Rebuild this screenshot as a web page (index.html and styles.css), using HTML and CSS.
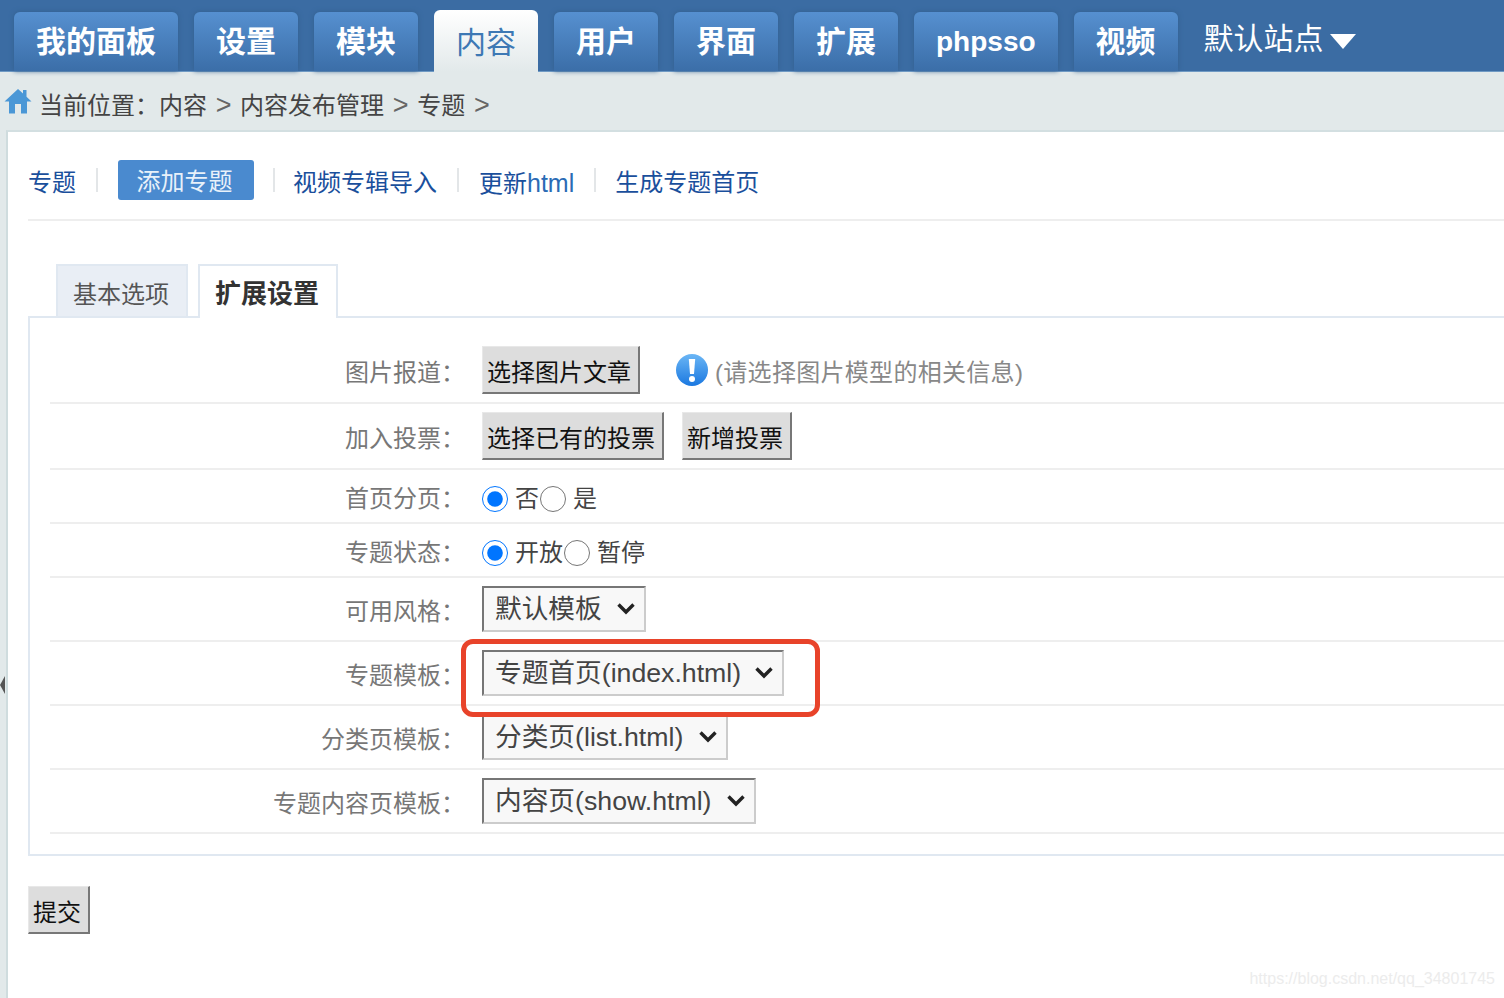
FILE: index.html
```html
<!DOCTYPE html>
<html lang="zh-CN">
<head>
<meta charset="utf-8">
<title>专题模板</title>
<link rel="stylesheet" href="styles.css">
</head>
<body>
<header class="topnav">
  <a class="navtab">我的面板</a>
  <a class="navtab">设置</a>
  <a class="navtab">模块</a>
  <a class="navtab navtab-on">内容</a>
  <a class="navtab">用户</a>
  <a class="navtab">界面</a>
  <a class="navtab">扩展</a>
  <a class="navtab navtab-latin">phpsso</a>
  <a class="navtab">视频</a>
  <div class="site">默认站点<span class="site-arrow"></span></div>
</header>
<nav class="crumb">
  <svg class="home" viewBox="0 0 28 26"><path d="M14 1 L0.5 13.5 L5 13.5 L5 25.5 L11 25.5 L11 16 L17 16 L17 25.5 L23 25.5 L23 13.5 L27.5 13.5 L22.5 8.8 L22.5 2 L19 2 L19 5.6 Z" fill="#4a97d6"/></svg>
  <span>当前位置：内容 <i class="gt">&gt;</i> 内容发布管理 <i class="gt">&gt;</i> 专题 <i class="gt">&gt;</i></span>
</nav>
<span class="edge-arrow"></span>
<main class="sheet">
  <div class="subnav">
    <a class="sublink">专题</a><i class="sep"></i>
    <a class="sublink sublink-on">添加专题</a><i class="sep sep-tight"></i>
    <a class="sublink">视频专辑导入</a><i class="sep"></i>
    <a class="sublink">更新<span class="latin">html</span></a><i class="sep"></i>
    <a class="sublink sublink-last">生成专题首页</a>
  </div>
  <div class="tabs">
    <a class="tab">基本选项</a>
    <a class="tab tab-on">扩展设置</a>
  </div>
  <section class="panel">
    <div class="row">
      <label class="lbl">图片报道：</label>
      <div class="field">
        <button class="btn">选择图片文章</button>
        <svg class="info" viewBox="0 0 32 32">
          <defs><linearGradient id="infoFill" x1="0" y1="0" x2="0" y2="1"><stop offset="0" stop-color="#6bb6f5"/><stop offset="1" stop-color="#1b78e0"/></linearGradient></defs>
          <circle cx="16" cy="16" r="16" fill="url(#infoFill)"/>
          <path d="M12.8 5 H19.2 L18 20 H14 Z" fill="#fff"/>
          <circle cx="16" cy="25" r="3" fill="#fff"/>
        </svg>
        <span class="hint">(请选择图片模型的相关信息)</span>
      </div>
    </div>
    <div class="row">
      <label class="lbl">加入投票：</label>
      <div class="field field-btns">
        <button class="btn">选择已有的投票</button>
        <button class="btn">新增投票</button>
      </div>
    </div>
    <div class="row row-radio">
      <label class="lbl">首页分页：</label>
      <div class="field radios">
        <input class="radio" type="radio" name="a" checked><span class="opt">否</span><input class="radio" type="radio" name="a"><span class="opt">是</span>
      </div>
    </div>
    <div class="row row-radio">
      <label class="lbl">专题状态：</label>
      <div class="field radios">
        <input class="radio" type="radio" name="b" checked><span class="opt">开放</span><input class="radio" type="radio" name="b"><span class="opt">暂停</span>
      </div>
    </div>
    <div class="row">
      <label class="lbl">可用风格：</label>
      <div class="selectbox sel-style">
        <select class="sel"><option>默认模板</option></select>
        <svg class="chev" viewBox="0 0 20 13"><path d="M2.5 2.5 L10 10 L17.5 2.5" fill="none" stroke="#222" stroke-width="3.4"/></svg>
      </div>
    </div>
    <div class="row row-marked">
      <label class="lbl">专题模板：</label>
      <div class="selectbox sel-index">
        <select class="sel"><option>专题首页(index.html)</option></select>
        <svg class="chev" viewBox="0 0 20 13"><path d="M2.5 2.5 L10 10 L17.5 2.5" fill="none" stroke="#222" stroke-width="3.4"/></svg>
      </div>
      <span class="mark"></span>
    </div>
    <div class="row">
      <label class="lbl">分类页模板：</label>
      <div class="selectbox sel-list">
        <select class="sel"><option>分类页(list.html)</option></select>
        <svg class="chev" viewBox="0 0 20 13"><path d="M2.5 2.5 L10 10 L17.5 2.5" fill="none" stroke="#222" stroke-width="3.4"/></svg>
      </div>
    </div>
    <div class="row">
      <label class="lbl">专题内容页模板：</label>
      <div class="selectbox sel-show">
        <select class="sel"><option>内容页(show.html)</option></select>
        <svg class="chev" viewBox="0 0 20 13"><path d="M2.5 2.5 L10 10 L17.5 2.5" fill="none" stroke="#222" stroke-width="3.4"/></svg>
      </div>
    </div>
  </section>
  <button class="btn btn-submit">提交</button>
</main>
<div class="watermark">https://blog.csdn.net/qq_34801745</div>
</body>
</html>
```
FILE: styles.css
```css
* { box-sizing: border-box; }
html, body { margin: 0; height: 100%; overflow: hidden; }
body {
  background: #e2e9ea;
  font-family: "Liberation Sans", "Noto Sans CJK SC", sans-serif;
  font-size: 24px;
  color: #444;
  position: relative;
}
i { font-style: normal; }

.topnav {
  height: 72px;
  background: #3b6ca3;
  border-bottom: 1px solid #6f9ac4;
  display: flex;
  align-items: flex-end;
  gap: 16px;
  padding-left: 14px;
}
.navtab {
  height: 59px;
  padding: 0 22px;
  border-radius: 6px 6px 0 0;
  background: linear-gradient(#5690d0, #3b6ea8);
  box-shadow: 0 0 5px #33608f;
  color: #fff;
  font-size: 30px;
  font-weight: 700;
  line-height: 60px;
  white-space: nowrap;
}
.navtab-latin { font-size: 28px; }
.navtab-on {
  height: 62px;
  padding: 0 22px;
  background: linear-gradient(#fff, #e2e9ea);
  box-shadow: none;
  color: #3d78b4;
  font-weight: 400;
  line-height: 65px;
  margin-bottom: -1px;
}
.site {
  align-self: flex-start;
  margin-top: 19px;
  margin-left: 10px;
  color: #fff;
  font-size: 30px;
  line-height: 40px;
  display: flex;
  align-items: center;
  gap: 6px;
}
.site-arrow {
  width: 0;
  height: 0;
  border-left: 13px solid transparent;
  border-right: 13px solid transparent;
  border-top: 15px solid #fff;
  margin-top: 5px;
}

.crumb {
  height: 58px;
  display: flex;
  align-items: center;
  gap: 7px;
  padding: 4px 0 0 4px;
  color: #444;
  white-space: pre;
}
.home { width: 28px; height: 26px; margin-top: -4px; }
.gt { color: #666; font-size: 27px; margin: 0 2px; }

.edge-arrow {
  position: absolute;
  left: 0;
  top: 676px;
  width: 0;
  height: 0;
  border-top: 9px solid transparent;
  border-bottom: 9px solid transparent;
  border-right: 5px solid #555;
}

.sheet {
  margin-left: 6px;
  height: 868px;
  background: #fff;
  border-left: 2px solid #cfdcde;
  border-top: 2px solid #d3dfe1;
  padding: 28px 0 0 20px;
}

.subnav {
  height: 61px;
  padding-bottom: 19px;
  border-bottom: 2px solid #eee;
  display: flex;
  align-items: center;
  gap: 20px;
}
.sublink { height: 40px; color: #1a4f9c; line-height: 46px; white-space: nowrap; }
.sublink-on {
  width: 136px;
  padding-right: 3px;
  border-radius: 3px;
  background: #4a8acf;
  color: #e8f1fa;
  text-align: center;
  line-height: 44px;
}
.sublink-last { margin-left: -1px; }
.latin { font-size: 25px; color: #2a6bb5; }
.sep { width: 2px; height: 24px; background: #e3e6e8; }
.sep-tight { margin: 0 -2px 0 -1px; }

.tabs {
  margin: 43px 0 0 28px;
  display: flex;
  gap: 10px;
  height: 52px;
  align-items: flex-start;
}
.tab {
  width: 132px;
  height: 52px;
  padding-right: 2px;
  background: #e9eef5;
  border: 2px solid #e0e8f1;
  border-bottom: 0;
  color: #555;
  text-align: center;
  line-height: 57px;
}
.tab-on {
  position: relative;
  z-index: 1;
  width: 140px;
  height: 54px;
  background: #fff;
  color: #333;
  font-size: 26px;
  font-weight: 700;
}

.panel {
  border: 2px solid #e0e8f1;
  border-right: 0;
  padding: 20px 0 20px 20px;
  height: 540px;
}
.row {
  display: flex;
  align-items: center;
  border-bottom: 2px solid #eee;
  padding: 8px 0;
  min-height: 64px;
}
.row-radio { min-height: 54px; }
.row-marked { position: relative; }
.lbl {
  width: 432px;
  height: 36px;
  flex: none;
  padding: 5px 17px 0 0;
  text-align: right;
  color: #777;
  white-space: nowrap;
  line-height: 31px;
}
.field { display: flex; align-items: center; }
.field-btns { gap: 18px; }

.btn {
  height: 48px;
  margin: 0;
  padding: 6px 7px 0 4px;
  background: #ddd;
  border: 0;
  border-top: 1px solid #e8e8e8;
  border-left: 1px solid #e8e8e8;
  border-right: 2px solid #777;
  border-bottom: 2px solid #777;
  color: #111;
  font: inherit;
  line-height: 38px;
}
.info { width: 32px; height: 32px; margin-left: 36px; }
.hint { margin-left: 7px; color: #888; letter-spacing: 0.3px; white-space: nowrap; }

.radios { height: 30px; margin-top: 6px; }
.radio { width: 26px; height: 26px; margin: 0; flex: none; }
.opt { margin: 0 1px 0 7px; color: #444; line-height: 30px; }

.selectbox { position: relative; height: 46px; }
.sel-style { width: 164px; }
.sel-index { width: 302px; }
.sel-list { width: 246px; }
.sel-show { width: 274px; }
.sel {
  appearance: none;
  -webkit-appearance: none;
  display: block;
  width: 100%;
  height: 46px;
  margin: 0;
  padding: 0 0 0 11px;
  background: #f8f8f8;
  border: 2px solid;
  border-color: #767676 #ccc #ccc #767676;
  border-radius: 0;
  color: #444;
  font-family: "Liberation Sans", "Noto Sans CJK SC", sans-serif;
  font-size: 26.7px;
}
.chev {
  position: absolute;
  right: 10px;
  top: 16px;
  width: 20px;
  height: 13px;
  pointer-events: none;
}
.mark {
  position: absolute;
  left: 411px;
  top: -3px;
  width: 359px;
  height: 78px;
  border: 5px solid #e8432a;
  border-radius: 12px;
  pointer-events: none;
  z-index: 2;
}

.btn-submit {
  display: block;
  width: 62px;
  margin-top: 30px;
  padding: 6px 3px 0 0;
  text-align: center;
}
.watermark {
  position: absolute;
  right: 9px;
  bottom: 8px;
  color: #ececec;
  font-size: 16px;
  line-height: 22px;
}
```
